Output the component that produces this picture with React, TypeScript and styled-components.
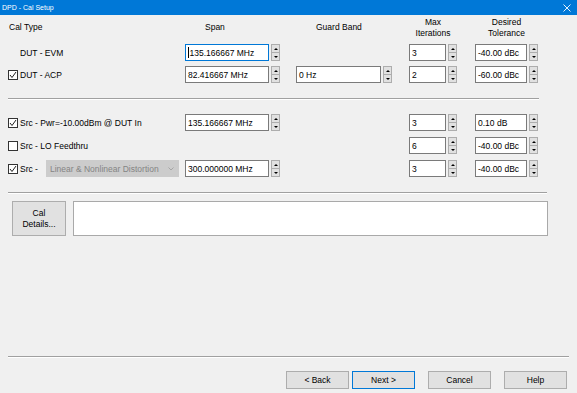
import React from "react";
import styled, { createGlobalStyle } from "styled-components";

interface ICalRow {
  check: boolean | null;
  label: string;
  dropdown?: string;
  span?: string;
  focus?: boolean;
  guard?: string;
  iter: string;
  tol: string;
}

const dutRows: ICalRow[] = [
  { check: null, label: "DUT - EVM", span: "135.166667 MHz", focus: true, iter: "3", tol: "-40.00 dBc" },
  { check: true, label: "DUT - ACP", span: "82.416667 MHz", guard: "0 Hz", iter: "2", tol: "-60.00 dBc" },
];

const srcRows: ICalRow[] = [
  { check: true, label: "Src - Pwr=-10.00dBm @ DUT In", span: "135.166667 MHz", iter: "3", tol: "0.10 dB" },
  { check: false, label: "Src - LO Feedthru", iter: "6", tol: "-40.00 dBc" },
  {
    check: true,
    label: "Src -",
    dropdown: "Linear & Nonlinear Distortion",
    span: "300.000000 MHz",
    iter: "3",
    tol: "-40.00 dBc",
  },
];

const COLS = "177px 95px 16px 96px 17px 48px 18px 63px";

const GlobalStyle = createGlobalStyle`
  html, body {
    margin: 0;
    padding: 0;
    background: #f0f0f0;
  }
  body {
    font-family: "Liberation Sans", Arial, sans-serif;
    font-size: 8.5px;
    color: #000;
  }
  * {
    box-sizing: border-box;
  }
`;

const Window = styled.div`
  width: 577px;
  height: 393px;
  display: flex;
  flex-direction: column;
  background: #f0f0f0;
  overflow: hidden;
`;
const TitleBar = styled.div`
  height: 15px;
  flex: none;
  background: #0078d7;
  color: #fff;
  font-size: 7px;
  display: flex;
  align-items: center;
  justify-content: space-between;
  padding: 0 6px 0 2px;
`;
const Body = styled.div`
  flex: 1;
  display: flex;
  flex-direction: column;
  padding: 0 8px 4px 8px;
`;
const HeaderGrid = styled.div`
  display: grid;
  grid-template-columns: ${COLS};
  height: 25px;
  align-items: center;
`;
const HeadCell = styled.div<{ $center?: boolean; $indent?: number }>`
  line-height: 11px;
  text-align: ${(p) => (p.$center ? "center" : "left")};
  padding-left: ${(p) => p.$indent ?? 0}px;
`;
const RowGroup = styled.div<{ $top: number; $gap: number }>`
  display: grid;
  grid-template-columns: ${COLS};
  grid-auto-rows: 17px;
  row-gap: ${(p) => p.$gap}px;
  margin-top: ${(p) => p.$top}px;
  align-items: stretch;
`;
const LabelCell = styled.div`
  display: flex;
  align-items: center;
  white-space: nowrap;
`;
const CheckBox = styled.span<{ $hidden?: boolean }>`
  width: 10px;
  height: 10px;
  flex: none;
  margin-right: 2px;
  border: 1px solid #333;
  background: #fff;
  display: flex;
  align-items: center;
  justify-content: center;
  visibility: ${(p) => (p.$hidden ? "hidden" : "visible")};
`;
const Dropdown = styled.div`
  width: 133px;
  height: 17px;
  margin-left: 8px;
  background: #cccccc;
  border: 1px solid #cccccc;
  color: #848484;
  display: flex;
  align-items: center;
  justify-content: space-between;
  padding: 0 4px 0 3px;
`;
const SpinBox = styled.div`
  display: flex;
  gap: 2px;
  height: 17px;
`;
const Field = styled.div<{ $w: number; $focus?: boolean }>`
  width: ${(p) => p.$w}px;
  height: 100%;
  background: #fff;
  border: 1px solid ${(p) => (p.$focus ? "#0078d7" : "#7a7a7a")};
  display: flex;
  align-items: center;
  padding-left: 2px;
  white-space: nowrap;
  overflow: hidden;
`;
const Caret = styled.span`
  width: 1px;
  height: 11px;
  background: #000;
  margin-right: 0.5px;
`;
const Spinner = styled.div`
  width: 9px;
  height: 100%;
  display: flex;
  flex-direction: column;
  border: 1px solid #adadad;
  background: #e1e1e1;
`;
const SpinHalf = styled.div<{ $down?: boolean }>`
  flex: 1;
  display: flex;
  align-items: center;
  justify-content: center;
  border-top: ${(p) => (p.$down ? "1px solid #adadad" : "none")};
  &::after {
    content: "";
    border-left: 2px solid transparent;
    border-right: 2px solid transparent;
    ${(p) => (p.$down ? "border-top: 2px solid #000;" : "border-bottom: 2px solid #000;")}
  }
`;
const Separator = styled.div<{ $top: number; $w: number }>`
  width: ${(p) => p.$w}px;
  margin-top: ${(p) => p.$top}px;
  border-top: 1px solid #a0a0a0;
  border-bottom: 1px solid #fff;
  flex: none;
`;
const DetailsRow = styled.div`
  display: flex;
  gap: 7px;
  margin-top: 7px;
  padding-left: 4px;
  height: 35px;
`;
const PushButton = styled.div<{ $w: number; $default?: boolean }>`
  width: ${(p) => p.$w}px;
  height: 100%;
  background: #e1e1e1;
  border: 1px solid ${(p) => (p.$default ? "#0078d7" : "#adadad")};
  display: flex;
  flex-direction: column;
  align-items: center;
  justify-content: center;
  line-height: 11px;
  text-align: center;
`;
const DetailsBox = styled.div`
  width: 475px;
  height: 100%;
  background: #fff;
  border: 1px solid #a9a9a9;
`;
const Spacer = styled.div`
  flex: 1;
`;
const ButtonRow = styled.div`
  display: flex;
  justify-content: flex-end;
  height: 18px;
  margin-top: 13px;
  padding-right: 2px;
`;
const NavGroup = styled.div<{ $gap: number }>`
  display: flex;
  gap: ${(p) => p.$gap}px;
  margin-left: 13px;
  height: 100%;
`;

function Check() {
  return (
    <svg width="8" height="8" viewBox="0 0 8 8">
      <polyline points="1,4 3,6.5 7,1" fill="none" stroke="#222" strokeWidth="1" />
    </svg>
  );
}

function Spin({ value, w, focus }: { value?: string; w: number; focus?: boolean }) {
  return (
    <SpinBox>
      <Field $w={w} $focus={focus}>
        {focus && <Caret />}
        {value}
      </Field>
      <Spinner>
        <SpinHalf />
        <SpinHalf $down />
      </Spinner>
    </SpinBox>
  );
}

function CalRow({ row }: { row: ICalRow }) {
  return (
    <>
      <LabelCell>
        <CheckBox $hidden={row.check === null}>{row.check && <Check />}</CheckBox>
        {row.label}
        {row.dropdown && (
          <Dropdown>
            <span>{row.dropdown}</span>
            <svg width="6" height="4" viewBox="0 0 6 4">
              <polyline points="0.5,0.5 3,3 5.5,0.5" fill="none" stroke="#9a9a9a" strokeWidth="0.8" />
            </svg>
          </Dropdown>
        )}
      </LabelCell>
      <div>{row.span && <Spin value={row.span} w={84} focus={row.focus} />}</div>
      <div />
      <div>{row.guard && <Spin value={row.guard} w={85} />}</div>
      <div />
      <Spin value={row.iter} w={38} />
      <div />
      <Spin value={row.tol} w={52} />
    </>
  );
}

export default function App() {
  return (
    <>
      <GlobalStyle />
      <Window>
        <TitleBar>
          <span>DPD - Cal Setup</span>
          <svg width="8" height="8" viewBox="0 0 8 8">
            <path d="M0.5 0.5 L7.5 7.5 M7.5 0.5 L0.5 7.5" stroke="#fff" strokeWidth="0.9" />
          </svg>
        </TitleBar>
        <Body>
          <HeaderGrid>
            <HeadCell $indent={1}>Cal Type</HeadCell>
            <HeadCell $indent={20}>Span</HeadCell>
            <div />
            <HeadCell $indent={20}>Guard Band</HeadCell>
            <div />
            <HeadCell $center>
              Max
              <br />
              Iterations
            </HeadCell>
            <div />
            <HeadCell $center>
              Desired
              <br />
              Tolerance
            </HeadCell>
          </HeaderGrid>
          <RowGroup $top={4} $gap={5}>
            {dutRows.map((r, i) => (
              <CalRow key={i} row={r} />
            ))}
          </RowGroup>
          <Separator $top={15} $w={531} />
          <RowGroup $top={14} $gap={6}>
            {srcRows.map((r, i) => (
              <CalRow key={i} row={r} />
            ))}
          </RowGroup>
          <Separator $top={15} $w={539} />
          <DetailsRow>
            <PushButton $w={54}>
              <span>Cal</span>
              <span>Details...</span>
            </PushButton>
            <DetailsBox />
          </DetailsRow>
          <Spacer />
          <Separator $top={0} $w={561} />
          <ButtonRow>
            <NavGroup $gap={3}>
              <PushButton $w={63}>&lt; Back</PushButton>
              <PushButton $w={63} $default>
                Next &gt;
              </PushButton>
            </NavGroup>
            <NavGroup $gap={13}>
              <PushButton $w={63}>Cancel</PushButton>
              <PushButton $w={63}>Help</PushButton>
            </NavGroup>
          </ButtonRow>
        </Body>
      </Window>
    </>
  );
}
